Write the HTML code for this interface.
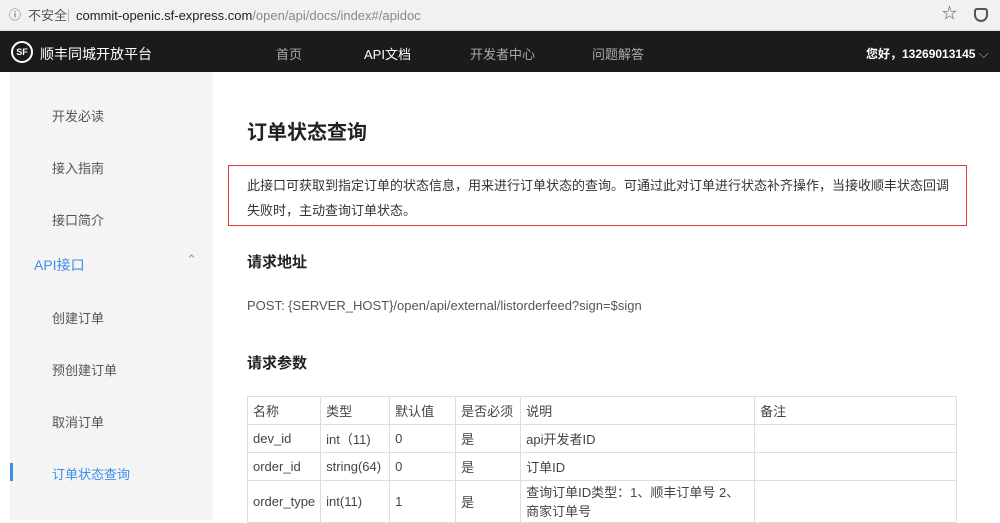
<!DOCTYPE html><html><head><meta charset="utf-8"><style>
*{margin:0;padding:0;box-sizing:border-box}
body{width:1000px;height:520px;overflow:hidden;background:#fff;font-family:"Liberation Sans","Noto Sans CJK SC",sans-serif;position:relative;color:#333}
.bar{position:absolute;left:0;top:0;width:1000px;height:31px;background:#f1f1f1;border-bottom:1px solid #ddd}
.bar .t{position:absolute;top:7px;font-size:13px;color:#555;line-height:17px}
.nav{position:absolute;left:0;top:31px;width:1000px;height:41px;background:#1b1b1b;color:#fff}
.nav span{position:absolute;top:13px;font-size:13px}
.side{position:absolute;left:10px;top:72px;width:203px;height:448px;background:#f4f4f5}
.side div{position:absolute;left:42px;font-size:13px;color:#555}
.c{position:absolute;font-size:14px;color:#333}
table{position:absolute;left:247px;top:396px;border-collapse:collapse;font-size:13px;color:#444}
td{border:1px solid #ddd;padding:0 5px;height:28px;vertical-align:middle}
</style></head><body>
<div class="bar">
<span class="t" style="left:9px;font-size:12px">ⓘ</span>
<span class="t" style="left:28px">不安全</span>
<span style="position:absolute;left:68px;top:9px;width:1px;height:13px;background:#bbb"></span>
<span class="t" style="left:76px;color:#222">commit-openic.sf-express.com<span style="color:#888">/open/api/docs/index#/apidoc</span></span>
<span class="t" style="left:942px;font-size:15px;top:5px">☆</span>
<span style="position:absolute;left:974px;top:8px;width:14px;height:14px;border:2px solid #555;border-radius:3px 3px 7px 7px"></span>
</div>
<div class="nav">
<span style="left:11px;top:10px;width:22px;height:22px;border:2px solid #fff;border-radius:50%;font-size:9px;font-weight:bold;text-align:center;line-height:18px">SF</span>
<span style="left:40px;font-size:14px">顺丰同城开放平台</span>
<span style="left:276px;color:#aaa">首页</span>
<span style="left:364px">API文档</span>
<span style="left:470px;color:#aaa">开发者中心</span>
<span style="left:592px;color:#aaa">问题解答</span>
<span style="left:866px;font-size:12px;font-weight:bold;top:14px">您好，13269013145 <span style="position:static;font-weight:normal;color:#aaa">⌵</span></span>
</div>
<div class="side">
<div style="top:34px">开发必读</div>
<div style="top:86px">接入指南</div>
<div style="top:138px">接口简介</div>
<div style="top:183px;left:24px;font-size:14px;color:#3b8ee8">API接口</div>
<div style="top:180px;left:176px;color:#999">⌃</div>
<div style="top:236px">创建订单</div>
<div style="top:288px">预创建订单</div>
<div style="top:340px">取消订单</div>
<div style="top:392px;color:#3b8ee8">订单状态查询</div>
<span style="position:absolute;left:0;top:391px;width:3px;height:18px;background:#3b8ee8"></span>
</div>
<div class="c" style="left:247px;top:116px;font-size:20px;font-weight:bold;color:#222">订单状态查询</div>
<div style="position:absolute;left:228px;top:165px;width:739px;height:61px;border:1px solid #e03a3a"></div>
<div class="c" style="left:247px;top:173px;width:708px;font-size:13px;line-height:25px">此接口可获取到指定订单的状态信息，用来进行订单状态的查询。可通过此对订单进行状态补齐操作，当接收顺丰状态回调失败时，主动查询订单状态。</div>
<div class="c" style="left:247px;top:251px;font-size:15px;font-weight:bold;color:#222">请求地址</div>
<div class="c" style="left:247px;top:298px;font-size:13px;color:#555">POST: {SERVER_HOST}/open/api/external/listorderfeed?sign=$sign</div>
<div class="c" style="left:247px;top:352px;font-size:15px;font-weight:bold;color:#222">请求参数</div>
<table>
<tr><td style="width:73px">名称</td><td style="width:69px">类型</td><td style="width:66px">默认值</td><td style="width:65px">是否必须</td><td style="width:234px">说明</td><td style="width:202px">备注</td></tr>
<tr><td>dev_id</td><td>int（11)</td><td>0</td><td>是</td><td>api开发者ID</td><td></td></tr>
<tr><td>order_id</td><td>string(64)</td><td>0</td><td>是</td><td>订单ID</td><td></td></tr>
<tr><td style="height:42px">order_type</td><td>int(11)</td><td>1</td><td>是</td><td style="line-height:19px">查询订单ID类型：1、顺丰订单号 2、商家订单号</td><td></td></tr>
</table>
</body></html>
